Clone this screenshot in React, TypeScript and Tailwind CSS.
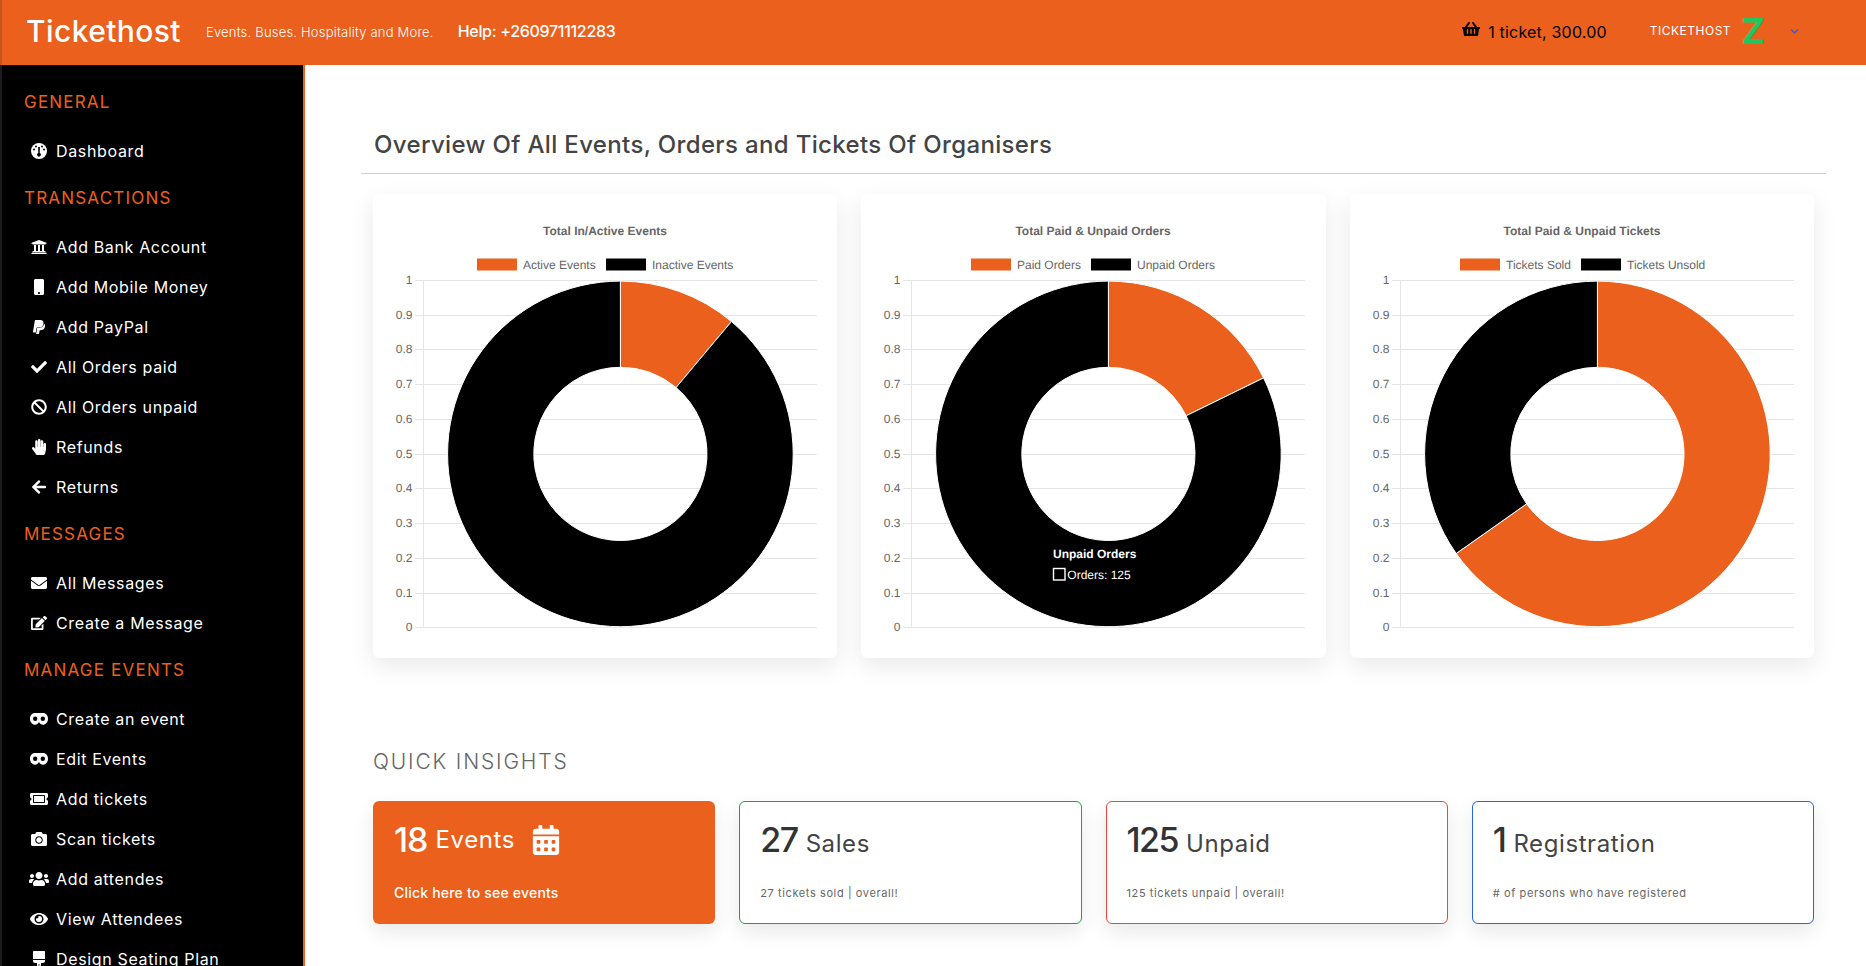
import { FaBan, FaBrush, FaCalendarAlt, FaCamera, FaCheck, FaChevronDown, FaEdit, FaEnvelope, FaEye, FaHandPaper, FaMobile, FaPaypal, FaShoppingBasket, FaTicketAlt, FaUniversity, FaUsers, FaArrowLeft } from 'react-icons/fa';
import type { ComponentType } from 'react';

const ORANGE = '#eb601c';

type IconProps = { className?: string };

// round gauge, the icon pack only has the half-moon one
const GaugeIcon = ({ className }: IconProps) => (
  <svg viewBox="0 0 16 16" className={className} width="16" height="16">
    <circle cx="8" cy="8" r="8" fill="#fff" />
    <path d="M7.1 4h1.8l-.2 6.1a1.8 1.8 0 1 1-1.4 0z" fill="#000" />
    <circle cx="3" cy="6.6" r="1" fill="#000" />
    <circle cx="5" cy="3.4" r="1" fill="#000" />
    <circle cx="11" cy="3.4" r="1" fill="#000" />
    <circle cx="13" cy="6.6" r="1" fill="#000" />
  </svg>
);

const MaskIcon = ({ className }: IconProps) => (
  <svg viewBox="0 0 18 12" className={className} width="18" height="12">
    <path
      fillRule="evenodd"
      fill="#fff"
      d="M5 0h8c3 0 5 2.5 5 5.7 0 3.5-2.4 6-5 6-1.8 0-3-1-4-2.8-1 1.8-2.200 2.800-4 2.800-2.600 0-5-2.500-5-6C0 2.500 2 0 5 0zM5.200 3.600a2.200 2.200 0 1 0 0 4.400 2.200 2.200 0 0 0 0-4.400zM12.800 3.600a2.200 2.200 0 1 0 0 4.400 2.200 2.200 0 0 0 0-4.400z"
    />
  </svg>
);

interface NavItem {
  label: string;
  icon: ComponentType<IconProps>;
  size?: string;
}

const navSections: { title: string; items: NavItem[] }[] = [
  { title: 'GENERAL', items: [{ label: 'Dashboard', icon: GaugeIcon }] },
  {
    title: 'TRANSACTIONS',
    items: [
      { label: 'Add Bank Account', icon: FaUniversity },
      { label: 'Add Mobile Money', icon: FaMobile },
      { label: 'Add PayPal', icon: FaPaypal },
      { label: 'All Orders paid', icon: FaCheck },
      { label: 'All Orders unpaid', icon: FaBan },
      { label: 'Refunds', icon: FaHandPaper },
      { label: 'Returns', icon: FaArrowLeft },
    ],
  },
  {
    title: 'MESSAGES',
    items: [
      { label: 'All Messages', icon: FaEnvelope },
      { label: 'Create a Message', icon: FaEdit },
    ],
  },
  {
    title: 'MANAGE EVENTS',
    items: [
      { label: 'Create an event', icon: MaskIcon },
      { label: 'Edit Events', icon: MaskIcon },
      { label: 'Add tickets', icon: FaTicketAlt, size: 'text-[18px]' },
      { label: 'Scan tickets', icon: FaCamera },
      { label: 'Add attendes', icon: FaUsers, size: 'text-[20px]' },
      { label: 'View Attendees', icon: FaEye, size: 'text-[18px]' },
      { label: 'Design Seating Plan', icon: FaBrush },
    ],
  },
];

interface ChartProps {
  title: string;
  labels: [string, string];
  legendX: [number, number, number, number];
  // clockwise angle where the orange slice ends
  angle: number;
  tooltip?: boolean;
}

const charts: ChartProps[] = [
  { title: 'Total In/Active Events', labels: ['Active Events', 'Inactive Events'], legendX: [104, 150, 233, 279], angle: 40 },
  { title: 'Total Paid & Unpaid Orders', labels: ['Paid Orders', 'Unpaid Orders'], legendX: [110, 156, 230, 276], angle: 63.9, tooltip: true },
  { title: 'Total Paid & Unpaid Tickets', labels: ['Tickets Sold', 'Tickets Unsold'], legendX: [110, 156, 231, 277], angle: 234.8 },
];

const CX = 247.4;
const CY = 259.9;
const OUTER = 172.8;
const INNER = 86.6;

const point = (r: number, deg: number) => {
  const rad = (deg * Math.PI) / 180;
  return `${(CX + r * Math.sin(rad)).toFixed(2)} ${(CY - r * Math.cos(rad)).toFixed(2)}`;
};

const slice = (from: number, to: number) => {
  const large = to - from > 180 ? 1 : 0;
  return `M${point(OUTER, from)} A${OUTER} ${OUTER} 0 ${large} 1 ${point(OUTER, to)} L${point(INNER, to)} A${INNER} ${INNER} 0 ${large} 0 ${point(INNER, from)} Z`;
};

const ticks = ['1', '0.9', '0.8', '0.7', '0.6', '0.5', '0.4', '0.3', '0.2', '0.1', '0'];

const DonutChart = ({ title, labels, legendX, angle, tooltip }: ChartProps) => (
  <div className="bg-white rounded-md shadow-[0_8px_24px_rgba(0,0,0,0.09)] h-[464px]">
    <svg
      width="100%"
      height="464"
      viewBox="0 0 464.33 464"
      textRendering="geometricPrecision"
      className="font-['Liberation_Sans',Arial,sans-serif] text-xs"
    >
      <text x="232" y="40.5" textAnchor="middle" fontWeight="700" fill="#666">{title}</text>
      <rect x={legendX[0]} y="64.5" width="40" height="12" fill={ORANGE} />
      <text x={legendX[1]} y="75" fill="#666">{labels[0]}</text>
      <rect x={legendX[2]} y="64.5" width="40" height="12" fill="#000" />
      <text x={legendX[3]} y="75" fill="#666">{labels[1]}</text>
      <line x1="50.5" y1="86" x2="50.5" y2="434" stroke="#e5e5e5" />
      {ticks.map((t, i) => {
        const y = Math.round(86 + i * 34.74) + 0.5;
        return (
          <g key={t}>
            <line x1="42" y1={y} x2="444" y2={y} stroke="#e5e5e5" />
            <text x="39.5" y={y + 3.5} textAnchor="end" fill="#666">{t}</text>
          </g>
        );
      })}
      <path d={slice(0, angle)} fill={ORANGE} stroke="#fff" />
      <path d={slice(angle, 360)} fill="#000" stroke="#fff" />
      {tooltip && (
        <g>
          <text x="192" y="364" fontWeight="700" fill="#fff">Unpaid Orders</text>
          <rect x="192.500" y="374.500" width="11.500" height="11.500" fill="#000" stroke="#fff" strokeWidth="1.400" />
          <text x="206.300" y="385" fill="#fff">Orders: 125</text>
        </g>
      )}
    </svg>
  </div>
);

const InsightCard = ({ count, label, note, border }: { count: string; label: string; note: string; border: string }) => (
  <div className={`bg-white border rounded-md h-[123px] px-[20px] shadow-[0_8px_20px_rgba(0,0,0,0.09)] ${border}`}>
    <div className="flex items-baseline gap-2 mt-[15px] text-[#444]">
      <span className="text-[34px] leading-[46px] font-medium text-[#333] tracking-[-1.5px]">{count}</span>
      <span className="text-2xl tracking-[0.6px]">{label}</span>
    </div>
    <p className="mt-[22px] text-[11px] tracking-[0.6px] text-[#666]">{note}</p>
  </div>
);

export default function App() {
  return (
    <div className="h-screen overflow-hidden flex flex-col bg-white font-['Inter',sans-serif]">
      <header className="h-[65px] shrink-0 bg-[#eb601c] border-l-2 border-[#c4551f] flex items-center pb-[3px] text-white">
        <span className="ml-6 text-[30px] font-medium tracking-[0.4px]">Tickethost</span>
        <span className="ml-[25px] text-[13px] font-light tracking-[0.2px] mt-[3px]">Events. Buses. Hospitality and More.</span>
        <span className="ml-6 text-base font-medium tracking-[-0.3px]">Help: +260971112283</span>
        <div className="ml-auto flex items-center text-black">
          <FaShoppingBasket className="text-[18px] -mt-1" />
          <span className="ml-2 text-base tracking-[0.2px] mt-0.5">1 ticket, 300.00</span>
        </div>
        <span className="ml-[43px] text-xs tracking-[0.5px] text-white">TICKETHOST</span>
        <span className="ml-[10px] text-4xl font-bold text-[#22c55e] leading-none">Z</span>
        <FaChevronDown className="ml-[25px] mr-[67px] text-[9px] text-[#3b5bdb]" />
      </header>

      <div className="flex flex-1 min-h-0">
        <aside className="w-[305px] shrink-0 bg-black border-l-2 border-r-2 border-l-[#1f1a1f] border-r-[#eb601c] pt-[25px] pl-[22px] text-white">
          {navSections.map((section, i) => (
            <div key={section.title} className={i > 0 ? 'mt-[15px]' : ''}>
              <h3 className="h-6 leading-6 text-[17px] tracking-[1.2px] text-[#eb601c]">{section.title}</h3>
              <ul className="mt-[17px]">
                {section.items.map(item => (
                  <li key={item.label} className="h-10 flex items-center">
                    <span className="w-[32px] pr-[2px] flex justify-center shrink-0">
                      <item.icon className={item.size ?? 'text-base'} />
                    </span>
                    <span className="text-base tracking-[0.65px]">{item.label}</span>
                  </li>
                ))}
              </ul>
            </div>
          ))}
        </aside>

        <main className="flex-1 min-w-0 pl-14 pr-10">
          <h1 className="mt-[62px] pl-[13px] h-9 leading-9 text-2xl font-medium tracking-[0.35px] text-[#444]">Overview Of All Events, Orders and Tickets Of Organisers</h1>
          <hr className="mt-[10px] border-[#ccd0d4]" />

          <div className="mt-5 grid grid-cols-3 px-3 gap-6">
            {charts.map(chart => (
              <DonutChart key={chart.title} {...chart} />
            ))}
          </div>

          <h2 className="mt-[90px] pl-3 text-[21px] leading-7 font-light tracking-[1.85px] text-[#666]">QUICK INSIGHTS</h2>

          <div className="mt-[25px] grid grid-cols-4 px-3 gap-6">
            <div className="bg-[#eb601c] rounded-md h-[123px] px-[21px] text-white shadow-[0_8px_20px_rgba(0,0,0,0.09)]">
              <div className="flex items-center mt-[16px]">
                <span className="text-[34px] leading-[46px] font-medium tracking-[-1px]">18</span>
                <span className="ml-2 text-2xl tracking-[0.6px]">Events</span>
                <FaCalendarAlt className="ml-4 text-[30px]" />
              </div>
              <p className="mt-[20px] text-sm font-medium tracking-[0.2px]">Click here to see events</p>
            </div>
            <InsightCard count="27" label="Sales" note="27 tickets sold | overall!" border="border-[#16a34a]" />
            <InsightCard count="125" label="Unpaid" note="125 tickets unpaid | overall!" border="border-[#ef4444]" />
            <InsightCard count="1" label="Registration" note="# of persons who have registered" border="border-[#2563eb]" />
          </div>
        </main>
      </div>
    </div>
  );
}
